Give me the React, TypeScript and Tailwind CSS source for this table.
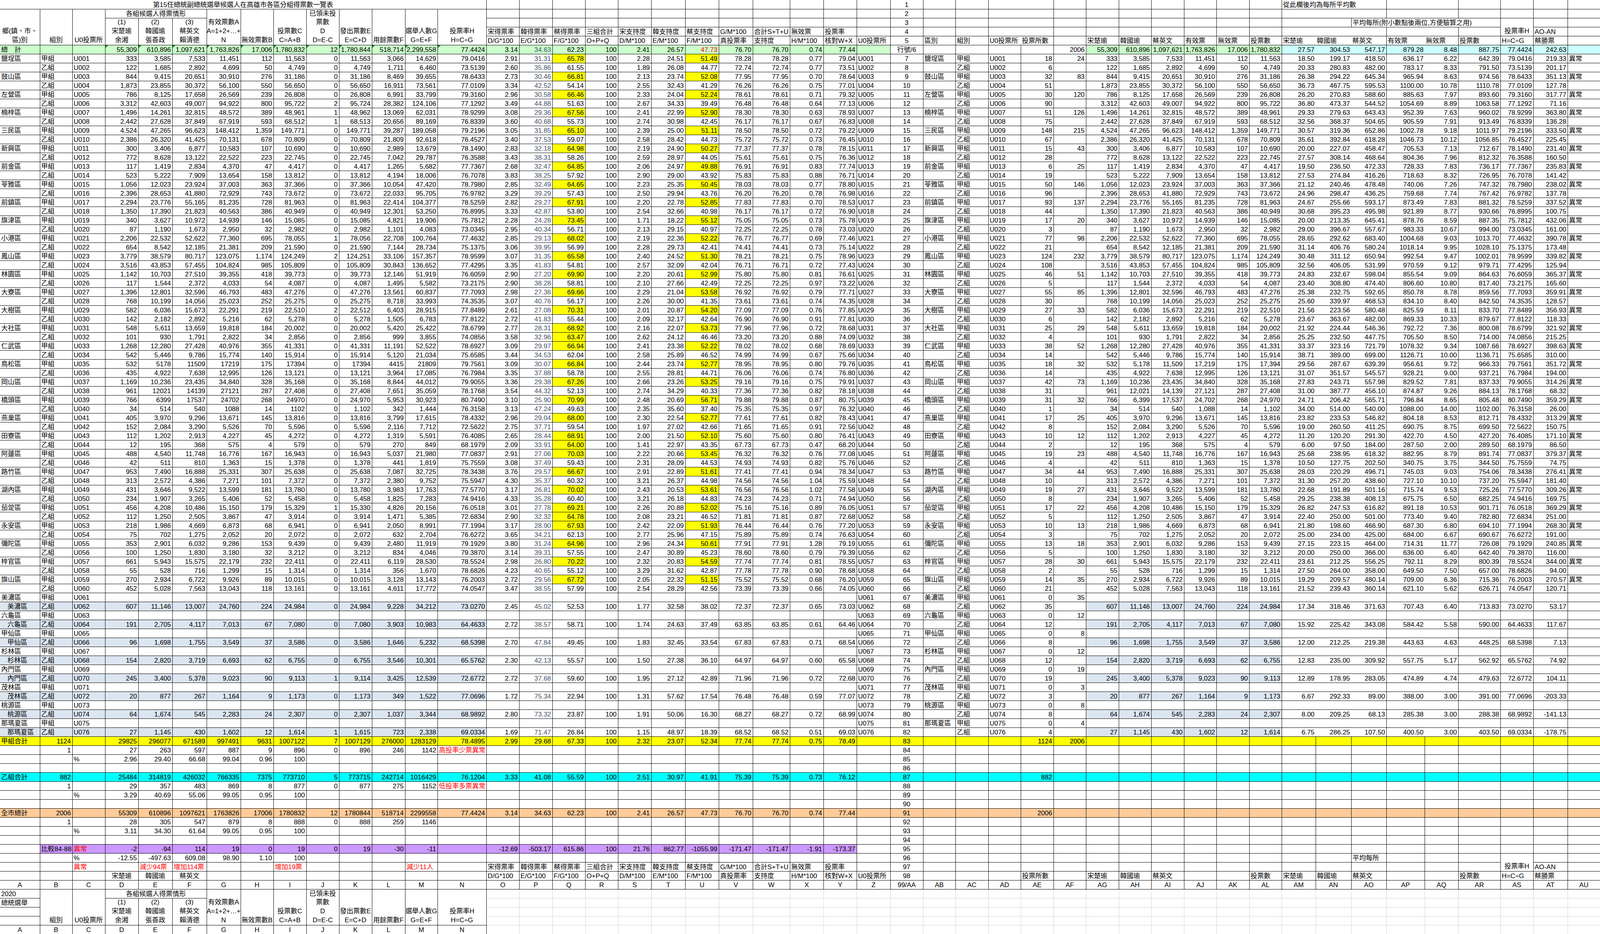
import clsx from 'clsx';

/**
 * 第15任總統副總統選舉 高雄市各區分組得票數一覽表
 * Spreadsheet: fixed-layout table, 47 columns (A..AU), 104 rows of 23px.
 * Column widths are sized for the 4096px-wide viewport the sheet is shot in.
 */

type Cell = {
  t?: string;
  lines?: string[];
  al?: 'l' | 'r' | 'c';
  bg?: string;
  fg?: string;
  cs?: number;
  rs?: number;
  nr?: boolean;
  gray?: boolean;
  tri?: boolean;
  ind?: boolean;
};

const LET = [
  ...'ABCDEFGHIJKLMNOPQRSTUVWXYZ'.split(''),
  ...'ABCDEFGHIJKLMNOPQRSTU'.split('').map((x) => 'A' + x),
];
const C = (s: string) => LET.indexOf(s) + 1;
const ROWS = 104;
const COLS = 47;

const WCLS = [
  // A..N
  'w-[102px]', 'w-[83px]', 'w-[84px]', 'w-[85px]', 'w-[87px]', 'w-[88px]', 'w-[87px]',
  'w-[84px]', 'w-[84px]', 'w-[84px]', 'w-[84px]', 'w-[85px]', 'w-[83px]', 'w-[125px]',
  // O..Z
  'w-[84px]', 'w-[85px]', 'w-[84px]', 'w-[84px]', 'w-[85px]', 'w-[87px]',
  'w-[86px]', 'w-[87px]', 'w-[95px]', 'w-[86px]', 'w-[85px]', 'w-[86px]',
  // AA, AB..AF
  'w-[84px]', 'w-[83px]', 'w-[84px]', 'w-[83px]', 'w-[84px]', 'w-[83px]',
  // AG..AL
  'w-[84px]', 'w-[83px]', 'w-[84px]', 'w-[83px]', 'w-[84px]', 'w-[83px]',
  // AM..AU
  'w-[87px]', 'w-[91px]', 'w-[90px]', 'w-[98px]', 'w-[86px]', 'w-[108px]',
  'w-[84px]', 'w-[88px]', 'w-[83px]',
];

const HCLS: Record<number, string> = { 1: 'h-[22px]', 2: 'h-[45px]', 3: 'h-[68px]', 4: 'h-[91px]' };

const GREEN = 'bg-[#ccffcc]';
const CYANL = 'bg-[#ccffff]';
const YELLOW = 'bg-[#ffff00]';
const CYAN = 'bg-[#00ffff]';
const ORANGE = 'bg-[#ffcc99]';
const PURPLE = 'bg-[#cc99ff]';
const BLUE = 'bg-[#dce6f1]';
const RED = 'text-[#ff0000]';
const SLATE = 'text-[#44546a]';

const DIST = [
  '鹽埕區', '鼓山區', '左營區', '楠梓區', '三民區', '新興區', '前金區', '苓雅區', '前鎮區', '旗津區',
  '小港區', '鳳山區', '林園區', '大寮區', '大樹區', '大社區', '仁武區', '鳥松區', '岡山區', '橋頭區',
  '燕巢區', '田寮區', '阿蓮區', '路竹區', '湖內區', '茄萣區', '永安區', '彌陀區', '梓官區', '旗山區',
  '美濃區', '六龜區', '甲仙區', '杉林區', '內門區', '茂林區', '桃源區', '那瑪夏區',
];

// 宋, 韓, 蔡, 無效, 已領未投, 用餘
const VOTES: (number[] | null)[] = [
  [333, 3585, 7533, 112, 0, 3066], [122, 1685, 2892, 50, 0, 1711],
  [844, 9415, 20651, 276, 0, 8469], [1873, 23855, 30372, 550, 0, 16911],
  [786, 8125, 17658, 239, 0, 6991], [3312, 42603, 49007, 800, 2, 28382],
  [1496, 14261, 32815, 389, 1, 13069], [2442, 27628, 37849, 593, 1, 20656],
  [4524, 47265, 96623, 1359, 0, 39287], [2386, 26320, 41425, 678, 0, 21809],
  [300, 3406, 6877, 107, 0, 2989], [772, 8628, 13122, 223, 0, 7042],
  [117, 1419, 2834, 47, 0, 1265], [523, 5222, 7909, 158, 0, 4194],
  [1056, 12023, 23924, 363, 0, 10054], [2396, 28653, 41880, 743, 0, 22033],
  [2294, 23776, 55165, 728, 0, 22414], [1350, 17390, 21823, 386, 0, 12301],
  [340, 3627, 10972, 146, 0, 4821], [87, 1190, 1673, 32, 0, 1101],
  [2206, 22532, 52622, 695, 1, 22708], [654, 8542, 12185, 209, 0, 7144],
  [3779, 38579, 80717, 1174, 2, 33106], [3516, 43853, 57455, 985, 0, 30843],
  [1142, 10703, 27510, 418, 0, 12146], [117, 1544, 2372, 54, 0, 1495],
  [1396, 12801, 32596, 483, 0, 13561], [768, 10199, 14056, 252, 0, 8718],
  [582, 6036, 15673, 219, 2, 6403], [142, 2182, 2892, 62, 0, 1505],
  [548, 5611, 13659, 184, 0, 5420], [101, 930, 1791, 34, 0, 999],
  [1268, 12280, 27428, 355, 0, 11191], [542, 5446, 9786, 140, 0, 5120],
  [532, 5178, 11509, 175, 0, 4415], [435, 4922, 7638, 126, 0, 3964],
  [1169, 10236, 23435, 328, 0, 8844], [961, 12021, 14139, 287, 0, 7651],
  [766, 6399, 17537, 268, 0, 5953], [34, 514, 540, 14, 0, 342],
  [405, 3970, 9296, 145, 0, 3799], [152, 2084, 3290, 70, 0, 2116],
  [112, 1202, 2913, 45, 0, 1319], [12, 195, 368, 4, 0, 270],
  [488, 4540, 11748, 167, 0, 5037], [42, 511, 810, 15, 0, 441],
  [953, 7490, 16888, 307, 0, 7087], [313, 2572, 4386, 101, 0, 2380],
  [431, 3646, 9522, 181, 0, 3983], [234, 1907, 3265, 52, 0, 1825],
  [456, 4208, 10486, 179, 1, 4826], [112, 1250, 2505, 47, 0, 1471],
  [218, 1986, 4669, 68, 0, 2050], [75, 702, 1275, 20, 0, 632],
  [353, 2901, 6032, 153, 0, 2480], [100, 1250, 1830, 32, 0, 834],
  [661, 5943, 15575, 232, 0, 6119], [55, 528, 716, 15, 0, 356],
  [270, 2934, 6722, 89, 0, 3128], [452, 5028, 7563, 118, 0, 4611],
  null, [607, 11146, 13007, 224, 0, 9228],
  null, [191, 2705, 4117, 67, 0, 3903],
  null, [96, 1698, 1755, 37, 0, 1646],
  null, [154, 2820, 3719, 62, 0, 3546],
  null, [245, 3400, 5378, 90, 1, 3425],
  null, [20, 877, 267, 9, 0, 349],
  null, [64, 1674, 545, 24, 0, 1037],
  null, [27, 1145, 430, 12, 1, 723],
];

const ST = [
  18, 6, 32, 51, 30, 90, 51, 75, 148, 67, 15, 28, 6, 19, 50, 96, 93, 44, 17, 3,
  77, 21, 124, 108, 46, 5, 55, 30, 27, 6, 25, 4, 38, 14, 18, 14, 42, 31, 31, 1,
  17, 8, 10, 2, 19, 4, 34, 10, 19, 8, 17, 5, 10, 3, 13, 5, 28, 2, 14, 21,
  0, 35, 0, 12, 0, 8, 0, 12, 0, 19, 0, 3, 0, 8, 0, 4,
];

// rows typed in without thousands separators, up to this column
const NOCOMMA: Record<number, number> = { 35: 13, 38: 7, 39: 9, 40: 9 };

const ROW4 = ['宋得票率', '韓得票率', '蔡得票率', '三組合計', '宋支持度', '韓支持度', '蔡支持度', 'G/M*100', '合計S+T+U', '無效票', '投票率'];
const ROW5 = ['D/G*100', 'E/G*100', 'F/G*100', 'O+P+Q', 'D/M*100', 'E/M*100', 'F/M*100', '真投票率', '支持度', 'H/M*100', '核對W+X', 'U0投票所'];

const fmt = (n: number) => String(n).replace(/\B(?=(\d{3})+(?!\d))/g, ',');
const f2 = (n: number) => n.toFixed(2);

const G: (Cell | null)[][] = Array.from({ length: ROWS + 1 }, () =>
  Array.from({ length: COLS + 1 }, () => ({}) as Cell),
);

function put(r: number, c: number, cell: Cell) {
  const cur = G[r][c];
  if (!cur) return;
  G[r][c] = { ...cur, ...cell };
  const cs = cell.cs ?? 1;
  const rs = cell.rs ?? 1;
  for (let i = r; i < r + rs; i++)
    for (let j = c; j < c + cs; j++) if (i !== r || j !== c) G[i][j] = null;
}

function row(r: number, c0: number, vals: (string | number)[], extra: Cell = {}) {
  vals.forEach((v, k) => {
    if (v === '') return;
    put(r, c0 + k, { t: String(v), al: 'r', ...extra });
  });
}

function labels(r: number, c0: number, vals: string[], extra: Cell = {}) {
  vals.forEach((v, k) => put(r, c0 + k, { t: v, al: 'l', ...extra }));
}

function paint(r: number, c0: number, c1: number, bg: string) {
  for (let c = c0; c <= c1; c++) {
    const cell = G[r][c];
    if (cell) cell.bg = bg;
  }
}

function leftHeader(r0: number, mini: boolean) {
  if (mini) {
    put(r0, 1, { t: '2020' });
    put(r0 + 1, 1, { t: '總統選舉' });
  } else {
    put(r0, 1, { lines: ['鄉(鎮、市、', '區)別'], rs: 4 });
  }
  put(r0, 2, { lines: ['組別'], rs: 4 });
  put(r0, 3, { lines: ['U0投票所'], rs: 4 });
  put(r0, 4, { t: '各組候選人得票情形', cs: 3, al: 'c' });
  put(r0, 7, { lines: ['有效票數A', 'A=1+2+…+', 'N'], rs: 4 });
  put(r0, 8, { lines: ['無效票數B'], rs: 4 });
  put(r0, 9, { lines: ['投票數C', 'C=A+B'], rs: 4 });
  put(r0, 10, { lines: ['已領未投', '票數', 'D', 'D=E-C'], rs: 4 });
  put(r0, 11, { lines: ['發出票數E', 'E=C+D'], rs: 4 });
  put(r0, 12, { lines: ['用餘票數F'], rs: 4 });
  put(r0, 13, { lines: ['選舉人數G', 'G=E+F'], rs: 4 });
  put(r0, 14, { lines: ['投票率H', 'H=C÷G'], rs: 4 });
  put(r0 + 1, 4, { lines: ['(1)', '宋楚瑜', '余湘'], rs: 3 });
  put(r0 + 1, 5, { lines: ['(2)', '韓國瑜', '張善政'], rs: 3 });
  put(r0 + 1, 6, { lines: ['(3)', '蔡英文', '賴清德'], rs: 3 });
}

/* ---------- header rows 1-5 ---------- */
put(1, 1, { t: '第15任總統副總統選舉候選人在高雄市各區分組得票數一覽表', cs: 14, al: 'c' });
leftHeader(2, false);
labels(4, 15, ROW4);
labels(5, 15, ROW5);
for (let r = 1; r <= 5; r++) {
  put(r, 27, { t: String(r), al: 'c' });
  put(r, C('AD'), { nr: true });
}
put(1, C('AM'), { t: '從此欄後均為每所平均數', cs: 3 });
put(1, C('AP'), { cs: 2 });
put(2, C('AM'), { cs: 3 });
put(2, C('AP'), { cs: 2 });
put(3, C('AM'), { cs: 2 });
put(3, C('AO'), { t: '平均每所(附小數點後兩位,方便驗算之用)', cs: 4 });
put(3, C('AS'), { lines: ['投票率H'], rs: 2 });
put(4, C('AM'), { cs: 3 });
put(4, C('AP'), { cs: 2 });
put(4, C('AT'), { t: 'AO-AN' });
labels(5, C('AB'), ['區別', '組別', 'U0投票所', '投票所數']);
labels(5, C('AG'), ['宋楚瑜', '韓國瑜', '蔡英文', '有效票', '無效票', '投票數', '宋楚瑜', '韓國瑜', '蔡英文', '有效票', '無效票', '投票數', 'H=C÷G', '蔡勝票']);
[C('AM'), C('AN'), C('AP')].forEach((c) => put(5, c, { nr: true }));

/* ---------- row 6: 總計 ---------- */
put(6, 1, { t: '總　計' });
row(6, 4, ['55,309', '610,896', '1,097,621', '1,763,826', '17,006', '1,780,832', '12', '1,780,844', '518,714', '2,299,558', '77.4424'], { tri: true });
row(6, 15, ['3.14', '34.63', '62.23', '100', '2.41', '26.57', '47.73', '76.70', '76.70', '0.74', '77.44']);
put(6, 16, { fg: SLATE });
put(6, 21, { fg: RED });
put(6, 27, { t: '行號/6', al: 'c' });
row(6, C('AF'), ['2006', '55,309', '610,896', '1,097,621', '1,763,826', '17,006', '1,780,832']);
row(6, C('AM'), ['27.57', '304.53', '547.17', '879.28', '8.48', '887.75', '77.4424', '242.63']);
[C('AM'), C('AN'), C('AP')].forEach((c) => put(6, c, { nr: true }));
paint(6, 1, 26, GREEN);
paint(6, C('AG'), C('AL'), GREEN);
paint(6, C('AM'), C('AU'), CYANL);

/* ---------- data rows 7-82 ---------- */
const winMargin = (v: number[] | null, st: number) => {
  if (!v || !st) return null;
  return v[2] / st - v[1] / st;
};

for (let i = 1; i <= 76; i++) {
  const r = 6 + i;
  const jia = i % 2 === 1;
  const name = DIST[Math.floor((i - 1) / 2)];
  const code = 'U' + String(i).padStart(3, '0');
  const v = VOTES[i - 1];
  const st = ST[i - 1];
  const blue = i > 60 && !jia;
  const grp = jia ? '甲組' : '乙組';

  if (jia) put(r, 1, { t: name });
  else if (blue) put(r, 1, { t: name, ind: true });
  put(r, 2, { t: grp });
  put(r, 3, { t: code });
  put(r, 26, { t: code });
  put(r, 27, { t: String(r), al: 'c' });
  if (jia) put(r, C('AB'), { t: name });
  put(r, C('AC'), { t: grp });
  put(r, C('AD'), { t: code });
  put(r, C('AE'), { t: String(st), al: 'r' });
  if (jia) put(r, C('AF'), { t: String(st + ST[i]), al: 'r' });
  [C('AM'), C('AN'), C('AP')].forEach((c) => put(r, c, { nr: true }));

  if (v) {
    const [d, e, f, h, j, l] = v;
    const g = d + e + f;
    const ii = g + h;
    const k = ii + j;
    const m = k + l;
    const nc = NOCOMMA[i] ?? 0;
    [d, e, f, g, h, ii, j, k, l, m].forEach((x, idx) =>
      put(r, 4 + idx, { t: 4 + idx <= nc ? String(x) : fmt(x), al: 'r' }),
    );
    const N = (ii / m) * 100;
    put(r, 14, { t: N.toFixed(4), al: 'r' });
    const S = (d / m) * 100;
    const T = (e / m) * 100;
    const U = (f / m) * 100;
    const W = S + T + U;
    const X = (h / m) * 100;
    const Q = (f / g) * 100;
    row(r, 15, [f2((d / g) * 100), f2((e / g) * 100), f2(Q), '100', f2(S), f2(T), f2(U), f2((g / m) * 100), f2(W), f2(X), f2(W + X)]);
    put(r, 16, { fg: SLATE });
    if (Q > 62.23) put(r, 17, { bg: YELLOW });
    if (U > 47.73) put(r, 21, { bg: YELLOW });
    row(r, C('AG'), [d, e, f, g, h, ii].map(fmt));
    row(r, C('AM'), [d, e, f, g, h, ii].map((x) => f2(x / st)));
    put(r, C('AS'), { t: N.toFixed(4), al: 'r' });
    put(r, C('AT'), { t: f2(f / st - e / st), al: 'r' });
    if (jia) {
      const a = winMargin(v, st);
      const b = winMargin(VOTES[i], ST[i]);
      if (a !== null && b !== null && a > b) put(r, C('AU'), { t: '異常' });
    }
  }
  if (blue) {
    paint(r, 1, 14, BLUE);
    paint(r, C('AG'), C('AL'), BLUE);
  }
}

/* ---------- summary rows 83-98 ---------- */
for (let r = 83; r <= 98; r++) put(r, 27, { t: String(r), al: 'c' });

put(83, 1, { t: '甲組合計' });
row(83, 2, ['1124']);
row(83, 4, ['29825', '296077', '671589', '997491', '9631', '1007122', '7', '1007129', '276000', '1283129', '78.4895']);
row(83, 15, ['2.99', '29.68', '67.33', '100', '2.32', '23.07', '52.34', '77.74', '77.74', '0.75', '78.49']);
row(83, C('AE'), ['1124', '2006']);
paint(83, 1, COLS, YELLOW);
row(84, 2, ['1']);
row(84, 4, ['27', '263', '597', '887', '9', '896', '0', '896', '246', '1142']);
put(84, 14, { t: '高投率少票異常', fg: RED });
put(85, 3, { t: '%' });
row(85, 4, ['2.96', '29.40', '66.68', '99.04', '0.96', '100']);

put(87, 1, { t: '乙組合計' });
row(87, 2, ['882']);
row(87, 4, ['25484', '314819', '426032', '766335', '7375', '773710', '5', '773715', '242714', '1016429', '76.1204']);
row(87, 15, ['3.33', '41.08', '55.59', '100', '2.51', '30.97', '41.91', '75.39', '75.39', '0.73', '76.12']);
row(87, C('AE'), ['882']);
paint(87, 1, COLS, CYAN);
row(88, 2, ['1']);
row(88, 4, ['29', '357', '483', '869', '8', '877', '0', '877', '275', '1152']);
put(88, 14, { t: '低投率多票異常', fg: RED });
put(89, 3, { t: '%' });
row(89, 4, ['3.29', '40.69', '55.06', '99.05', '0.95', '100']);

put(91, 1, { t: '全市總計' });
row(91, 2, ['2006']);
row(91, 4, ['55309', '610896', '1097621', '1763826', '17006', '1780832', '12', '1780844', '518714', '2299558', '77.4424']);
row(91, 15, ['3.14', '34.63', '62.23', '100', '2.41', '26.57', '47.73', '76.70', '76.70', '0.74', '77.44']);
row(91, C('AE'), ['2006']);
paint(91, 1, COLS, ORANGE);
row(92, 2, ['1']);
row(92, 4, ['28', '305', '547', '879', '8', '888', '0', '888', '259', '1146']);
put(93, 3, { t: '%' });
row(93, 4, ['3.11', '34.30', '61.64', '99.05', '0.95', '100']);

put(95, 2, { t: '比較84-88' });
put(95, 3, { t: '異常', fg: RED });
row(95, 4, ['-2', '-94', '114', '19', '0', '19', '0', '19', '-30', '-11']);
row(95, 15, ['-12.69', '-503.17', '615.86', '100', '21.76', '862.77', '-1055.99', '-171.47', '-171.47', '-1.91', '-173.37']);
paint(95, 2, 25, PURPLE);
put(96, 3, { t: '%' });
row(96, 4, ['-12.55', '-497.63', '609.08', '98.90', '1.10', '100']);
put(96, C('AO'), { t: '平均每所' });
put(96, C('AS'), { lines: ['投票率H'], rs: 2 });

put(97, 3, { t: '異常', fg: RED });
put(97, 5, { t: '減少94票', fg: RED });
put(97, 6, { t: '增加114票', fg: RED });
put(97, 9, { t: '增加19票', fg: RED });
put(97, 13, { t: '減少11人', fg: RED });
labels(97, 15, ROW4);
put(97, C('AT'), { t: 'AO-AN' });

labels(98, 4, ['宋楚瑜', '韓國瑜', '蔡英文'], { al: 'c' });
labels(98, 15, ROW5);
put(98, C('AE'), { t: '投票所數' });
labels(98, C('AG'), ['宋楚瑜', '韓國瑜', '蔡英文']);
put(98, C('AL'), { t: '投票數' });
labels(98, C('AM'), ['宋楚瑜', '韓國瑜', '蔡英文']);
put(98, C('AR'), { t: '投票數' });
labels(98, C('AS'), ['H=C÷G', '蔡勝票']);

/* ---------- column letters + repeated mini header ---------- */
for (let c = 1; c <= COLS; c++) put(99, c, { t: c === 27 ? '99/AA' : LET[c - 1], al: 'c' });
leftHeader(100, true);
for (let c = 1; c <= 14; c++) put(104, c, { t: LET[c - 1], al: 'c' });
for (let r = 100; r <= 104; r++)
  for (let c = 15; c <= COLS; c++) put(r, c, { gray: true });

function Td({ c }: { c: Cell }) {
  const tdCls = clsx(
    'p-0 align-bottom border-b',
    c.nr ? 'border-r-0' : 'border-r',
    c.gray ? 'border-[#d4d4d4]' : 'border-black',
    c.bg,
    c.fg,
  );
  const h = HCLS[c.rs ?? 1];
  if (c.lines) {
    return (
      <td className={tdCls} colSpan={c.cs} rowSpan={c.rs}>
        <div className={clsx('flex flex-col items-center justify-end whitespace-nowrap', h)}>
          {c.lines.map((l, i) => (
            <div key={i} className="leading-[22.75px]">
              {l}
            </div>
          ))}
        </div>
      </td>
    );
  }
  const al =
    c.al === 'r'
      ? 'justify-end pr-[3px]'
      : c.al === 'c'
        ? 'justify-center'
        : c.ind
          ? 'justify-start pl-[19px]'
          : 'justify-start pl-[3px]';
  return (
    <td className={tdCls} colSpan={c.cs} rowSpan={c.rs}>
      <div className={clsx('relative flex items-end whitespace-nowrap leading-[21px]', h, al)}>
        {c.tri && (
          <span className="absolute top-0 left-0 border-t-[7px] border-r-[7px] border-t-[#1e8a1e] border-r-transparent" />
        )}
        {c.t}
      </div>
    </td>
  );
}

export default function App() {
  const rows = [];
  for (let r = 1; r <= ROWS; r++) {
    const tds = [];
    for (let c = 1; c <= COLS; c++) {
      const cell = G[r][c];
      if (cell) tds.push(<Td key={c} c={cell} />);
    }
    rows.push(
      <tr key={r} className="h-[23px]">
        {tds}
      </tr>,
    );
  }

  return (
    <div className="w-[4096px] h-[2392px] overflow-hidden bg-white text-black text-[17px] font-['Liberation_Sans','Noto_Sans_CJK_TC',sans-serif]">
      <table className="table-fixed border-collapse w-[4096px]">
        <colgroup>
          {WCLS.map((w, i) => (
            <col key={i} className={w} />
          ))}
        </colgroup>
        <tbody>{rows}</tbody>
      </table>
    </div>
  );
}
